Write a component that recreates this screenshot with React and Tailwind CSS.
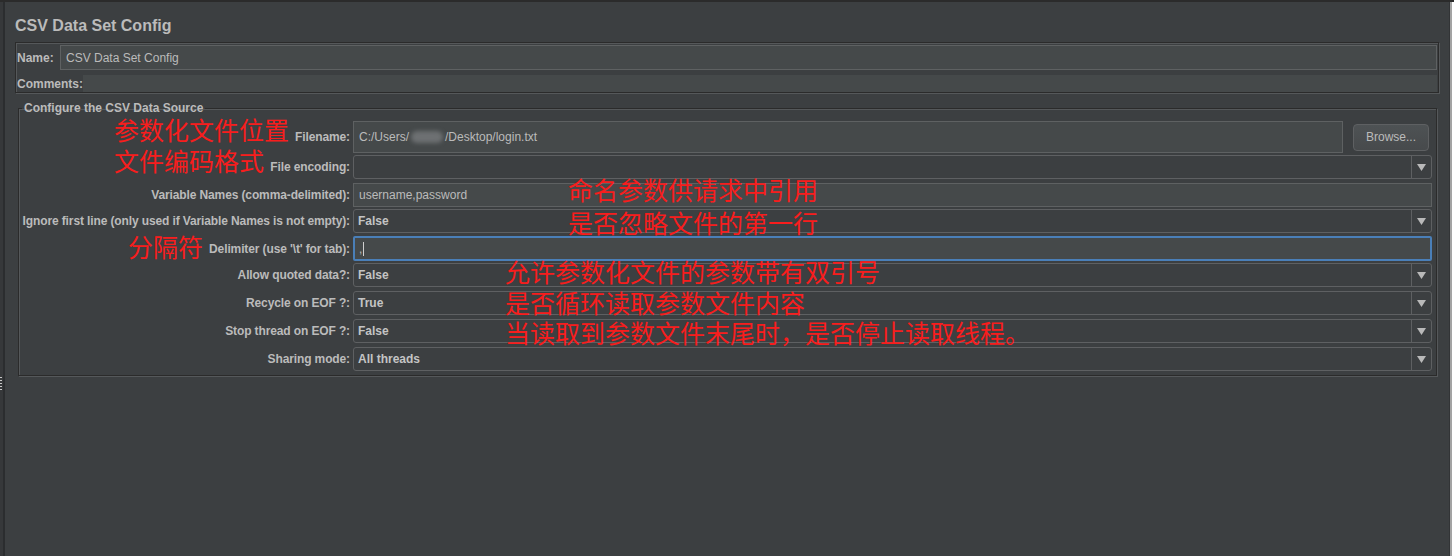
import React from "react";

// --- small drawings ---
const ArrowDown = () => (
  <svg width="9" height="7" viewBox="0 0 9 7">
    <path d="M0 0 L9 0 L4.5 7 Z" fill="#b9b9b9" />
  </svg>
);

// --- field widgets ---
const TextField = ({ children, className = "" }) => (
  <div
    className={`flex h-full items-center border border-[#5e6162] bg-[#45494a] pl-[5px] text-[12px] text-[#bbbbbb] ${className}`}
  >
    {children}
  </div>
);

const Combo = ({ value }) => (
  <div className="flex h-full items-stretch rounded-[3px] border border-[#5e6062] bg-[#3c3f41]">
    <div className="flex flex-1 items-center pl-[4px] text-[12px] font-bold text-[#c4c4c4]">
      {value}
    </div>
    <div className="flex w-[20px] items-center justify-center border-l border-[#5e6062]">
      <ArrowDown />
    </div>
  </div>
);

// rows of the CSV data source block
const rows = [
  { label: "Filename:", kind: "file", h: "h-[32px]", mt: "mt-0" },
  { label: "File encoding:", kind: "combo", value: "", h: "h-[24px]", mt: "mt-[2px]" },
  { label: "Variable Names (comma-delimited):", kind: "text", value: "username,password", h: "h-[24px]", mt: "mt-[4px]" },
  { label: "Ignore first line (only used if Variable Names is not empty):", kind: "combo", value: "False", h: "h-[24px]", mt: "mt-[2px]" },
  { label: "Delimiter (use '\\t' for tab):", kind: "delim", h: "h-[25px]", mt: "mt-[3px]" },
  { label: "Allow quoted data?:", kind: "combo", value: "False", h: "h-[24px]", mt: "mt-[2px]" },
  { label: "Recycle on EOF ?:", kind: "combo", value: "True", h: "h-[24px]", mt: "mt-[4px]" },
  { label: "Stop thread on EOF ?:", kind: "combo", value: "False", h: "h-[24px]", mt: "mt-[4px]" },
  { label: "Sharing mode:", kind: "combo", value: "All threads", h: "h-[24px]", mt: "mt-[4px]" },
];

// red notes written over the screenshot
const notes = [
  { text: "参数化文件位置", cls: "left-[114px] top-[117px]" },
  { text: "文件编码格式", cls: "left-[114px] top-[148px]" },
  { text: "命名参数供请求中引用", cls: "left-[568px] top-[177px]" },
  { text: "是否忽略文件的第一行", cls: "left-[568px] top-[210px]" },
  { text: "分隔符", cls: "left-[128px] top-[234px]" },
  { text: "允许参数化文件的参数带有双引号", cls: "left-[505px] top-[259px]" },
  { text: "是否循环读取参数文件内容", cls: "left-[505px] top-[290px]" },
  { text: "当读取到参数文件末尾时，是否停止读取线程。", cls: "left-[505px] top-[320px]" },
];

function FieldFor({ row }) {
  if (row.kind === "file") {
    return (
      <div className="flex h-full items-stretch">
        <TextField className="flex-1">
          <span>C:/Users/</span>
          <span className="relative inline-block h-[12px] w-[36px]">
            <span className="absolute left-[2px] top-0 h-[12px] w-[32px] rounded-full bg-[#6d7072] blur-[2px]" />
          </span>
          <span>/Desktop/login.txt</span>
        </TextField>
        <div className="ml-[10px] mr-[3px] flex items-center">
          <button
            type="button"
            className="h-[27px] w-[76px] rounded-[4px] border border-[#5e6062] bg-gradient-to-b from-[#4e5254] to-[#474a4c] text-[12px] text-[#bbbbbb]"
          >
            Browse...
          </button>
        </div>
      </div>
    );
  }
  if (row.kind === "text") {
    return <TextField>{row.value}</TextField>;
  }
  if (row.kind === "delim") {
    return (
      <div className="flex h-full items-center rounded-[2px] border-2 border-[#4a7fb8] bg-[#45494a] pl-[4px] text-[12px] text-[#bbbbbb]">
        <span>,</span>
        <span className="ml-px h-[14px] w-px bg-[#cfcfcf]" />
      </div>
    );
  }
  return <Combo value={row.value} />;
}

export default function App() {
  return (
    <div className="relative flex h-screen w-full flex-col overflow-hidden bg-[#3c3f41] font-['Liberation_Sans',Arial,sans-serif] text-[#bbbbbb]">
      <div className="h-[2px] w-full bg-[#2b2b2b]" />
      <div className="flex flex-1">
        {/* left splitter */}
        <div className="flex w-[3px] flex-col bg-[#36383a] pt-[375px]">
          {[0, 1, 2, 3, 4].map((i) => (
            <div key={i} className="mb-[2px] h-px w-[2px] bg-[#c8c8c8]" />
          ))}
        </div>
        <div className="w-[2px] bg-[#2b2d2f]" />

        {/* main panel */}
        <div className="flex flex-1 flex-col px-[10px] pt-[14px]">
          <h1 className="h-5 text-[16px] font-bold leading-5 text-[#bbbbbb]">
            CSV Data Set Config
          </h1>

          {/* name / comments */}
          <div className="mt-[6px] flex flex-col border border-[#2b2b2b] pt-[2px] shadow-[inset_1px_1px_0_#55585a,1px_1px_0_#55585a]">
            <div className="flex h-[25px] items-center pl-px pr-px">
              <span className="w-[43px] text-[12px] font-bold">Name:</span>
              <div className="flex h-full flex-1 items-center border border-[#5e6162] bg-[#45494a] pl-[5px] text-[12px]">
                CSV Data Set Config
              </div>
            </div>
            <div className="mt-[5px] flex h-[17px] items-center pl-px pr-px">
              <span className="w-[66px] text-[12px] font-bold">Comments:</span>
              <div className="h-full flex-1 bg-[#45494a]" />
            </div>
          </div>

          {/* csv data source */}
          <fieldset className="ml-[3px] mr-[2px] mt-[8px] border border-[#2b2b2b] pb-[4px] pl-[3px] shadow-[inset_1px_1px_0_#55585a,1px_1px_0_#55585a]">
            <legend className="ml-0 px-[2px] text-[12px] font-bold leading-[14px]">
              Configure the CSV Data Source
            </legend>
            <div className="flex flex-col pt-[6px]">
              {rows.map((row) => (
                <div key={row.label} className={`flex ${row.h} ${row.mt} items-center`}>
                  <div className="flex w-[328px] shrink-0 justify-end whitespace-nowrap text-[12px] font-bold tracking-[-0.12px]">
                    {row.label}
                  </div>
                  <div className="ml-[3px] mr-[4px] h-full flex-1">
                    <FieldFor row={row} />
                  </div>
                </div>
              ))}
            </div>
          </fieldset>
        </div>

        {/* right edge */}
        <div className="w-px bg-[#323436]" />
        <div className="w-[2px] bg-[#a3a3a3]" />
        <div className="w-[2px] bg-white" />
      </div>

      {notes.map((n) => (
        <div
          key={n.text}
          className={`absolute ${n.cls} whitespace-nowrap text-[25px] leading-[25px] text-[#f81d1d] font-['Noto_Sans_CJK_SC',sans-serif]`}
        >
          {n.text}
        </div>
      ))}
    </div>
  );
}
